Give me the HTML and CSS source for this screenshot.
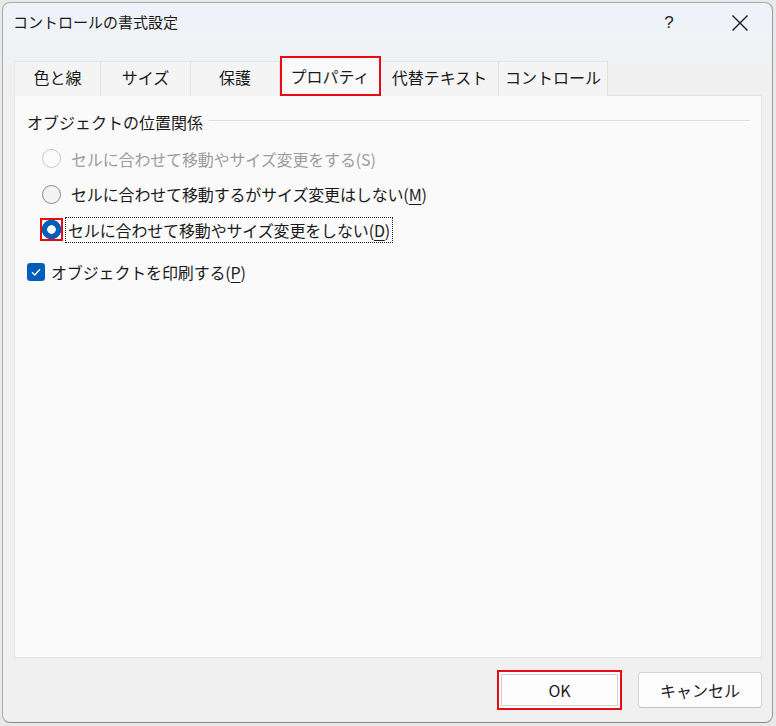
FILE: index.html
```html
<!DOCTYPE html>
<html lang="ja">
<head>
<meta charset="utf-8">
<title>コントロールの書式設定</title>
<link rel="stylesheet" href="styles.css">
</head>
<body>
<div class="window">
  <div class="titlebar">
    <span class="title">コントロールの書式設定</span>
    <span class="help">?</span>
    <span class="close">
      <svg width="18" height="18" viewBox="0 0 18 18"><path d="M1.5 1.5 L16.5 16.5 M16.5 1.5 L1.5 16.5" stroke="#1a1a1a" stroke-width="1.4" fill="none"/></svg>
    </span>
  </div>
  <div class="content">
    <div class="tabs">
      <div class="tab w1">色と線</div>
      <div class="tab w2">サイズ</div>
      <div class="tab w3">保護</div>
      <div class="tab w4 selected mark">プロパティ</div>
      <div class="tab w5">代替テキスト</div>
      <div class="tab w6">コントロール</div>
    </div>
    <div class="panel">
      <div class="group-label"><span>オブジェクトの位置関係</span><span class="rule"></span></div>
      <div class="radios">
        <div class="row disabled"><span class="radio"></span><span class="lbl">セルに合わせて移動やサイズ変更をする(S)</span></div>
        <div class="row"><span class="radio"></span><span class="lbl">セルに合わせて移動するがサイズ変更はしない(<u>M</u>)</span></div>
        <div class="row"><span class="radio checked mark"></span><span class="lbl focus">セルに合わせて移動やサイズ変更をしない(<u>D</u>)</span></div>
      </div>
      <div class="row check-row">
        <span class="checkbox"><svg width="12" height="12" viewBox="0 0 12 12"><path d="M2 6.3 L4.8 9 L10 3.2" stroke="#fff" stroke-width="1.3" fill="none"/></svg></span>
        <span class="lbl">オブジェクトを印刷する(<u>P</u>)</span>
      </div>
    </div>
    <div class="footer">
      <button class="btn ok mark">OK</button>
      <button class="btn">キャンセル</button>
    </div>
  </div>
</div>
</body>
</html>
```
FILE: styles.css
```css
html, body {
  margin: 0;
  padding: 0;
}
body {
  width: 776px;
  height: 726px;
  background: #e9e9e9;
  padding: 2px 0 0 2px;
  box-sizing: border-box;
  font-family: "Noto Sans CJK JP", "Noto Sans", sans-serif;
  color: #1a1a1a;
  overflow: hidden;
}
.window {
  width: 771px;
  height: 721px;
  box-sizing: border-box;
  border: 1px solid #a9a9a9;
  border-bottom-color: #8a8a8a;
  border-right-color: #9a9a9a;
  border-radius: 8px;
  background: linear-gradient(to bottom, #eef3fa 0px, #f0f2f5 45px, #f0f0f0 70px, #f0f0f0 100%);
  display: flex;
  flex-direction: column;
  overflow: hidden;
}
.titlebar {
  height: 45px;
  display: flex;
  align-items: center;
  padding-left: 10px;
  flex-shrink: 0;
}
.title {
  font-size: 15px;
  line-height: 20px;
  flex: 1;
  margin-top: -7px;
}
.help {
  font-family: "Liberation Sans", sans-serif;
  font-size: 17px;
  width: 20px;
  text-align: center;
  margin-right: 52px;
  margin-top: -6px;
  color: #222;
}
.close {
  width: 18px;
  height: 18px;
  margin-right: 23px;
  margin-top: -5px;
  display: flex;
}
.content {
  padding: 8px 10px 0 11px;
  display: flex;
  flex-direction: column;
}
.tabs {
  display: flex;
  align-items: flex-end;
  height: 40px;
  margin-bottom: -1px;
  position: relative;
  z-index: 1;
}
.tab {
  height: 35px;
  box-sizing: border-box;
  background: #f4f4f4;
  border-top: 1px solid #e6e6e6;
  border-right: 1px solid #e2e2e2;
  font-size: 16px;
  display: flex;
  align-items: center;
  justify-content: center;
  line-height: 20px;
  padding-bottom: 5px;
}
.tab.w1 { width: 87px; border-left: 1px solid #e6e6e6; }
.tab.w2 { width: 90px; }
.tab.w3 { width: 89px; }
.tab.w4 { width: 101px; }
.tab.w5 { width: 118px; }
.tab.w6 { width: 109px; }
.tab.selected {
  height: 40px;
  background: #fafafa;
  border-color: transparent;
  padding-bottom: 2px;
}
.mark {
  outline: 2px solid #ea0a14;
  outline-offset: -2px;
}
.panel {
  height: 563px;
  box-sizing: border-box;
  background: #fafafa;
  border: 1px solid #e3e3e3;
  padding: 16px 12px 0 12px;
}
.group-label {
  display: flex;
  align-items: center;
  font-size: 16px;
  line-height: 20px;
  height: 20px;
}
.group-label .rule {
  flex: 1;
  height: 1px;
  background: #dcdcdc;
  border-bottom: 1px solid #ffffff;
  margin-left: 6px;
  margin-right: -1px;
  margin-top: -3px;
}
.radios {
  margin-top: 9px;
  padding-left: 15px;
}
.row {
  display: flex;
  align-items: center;
  height: 35.5px;
  font-size: 16px;
  line-height: 20px;
}
.row .lbl {
  margin-left: 8px;
  padding: 2px 2px 2px 1px;
  border: 1px solid transparent;
  letter-spacing: -0.15px;
}
.row .lbl.focus {
  border: 1px dotted #222;
  margin-left: 4px;
  padding-left: 2px;
}
.row u {
  text-decoration-thickness: 1px;
  text-underline-offset: 3px;
}
.radio {
  width: 19px;
  height: 19px;
  box-sizing: border-box;
  border-radius: 50%;
  border: 1px solid #8b8b8b;
  background: #f3f3f3;
  flex-shrink: 0;
  position: relative;
}
.row.disabled .radio {
  border-color: #c8c8c8;
  background: #fbfbfb;
}
.row.disabled .lbl {
  color: #9c9c9c;
}
.radio.checked {
  border: none;
  width: 23px;
  height: 23px;
  margin-left: -2px;
  margin-right: -2px;
  border-radius: 0;
  background: radial-gradient(circle at center, #ffffff 0 4px, #005fb8 4.6px 9.4px, transparent 10px);
}
.check-row {
  margin-top: 7px;
}
.checkbox {
  width: 18px;
  height: 18px;
  border-radius: 3px;
  background: #005fb8;
  display: flex;
  align-items: center;
  justify-content: center;
  flex-shrink: 0;
}
.check-row .lbl {
  margin-left: 4px;
}
.footer {
  display: flex;
  justify-content: flex-end;
  gap: 16px;
  margin-top: 12px;
}
.btn {
  width: 125px;
  height: 40px;
  box-sizing: border-box;
  font-family: "Noto Sans CJK JP", "Noto Sans", sans-serif;
  font-size: 16px;
  color: #1a1a1a;
  background: #fdfdfd;
  border: 1px solid #d4d4d4;
  border-bottom-color: #c4c4c4;
  border-radius: 4px;
  padding: 0;
  line-height: 20px;
}
.btn:not(.ok) {
  width: 124px;
  height: 36px;
  margin-top: 2px;
}
.btn.ok {
  border-radius: 0;
  border: 2px solid #ea0a14;
  outline: none;
  box-shadow: inset 0 0 0 2px #ffffff, inset 0 0 0 3px #d0d0d0;
}
```
